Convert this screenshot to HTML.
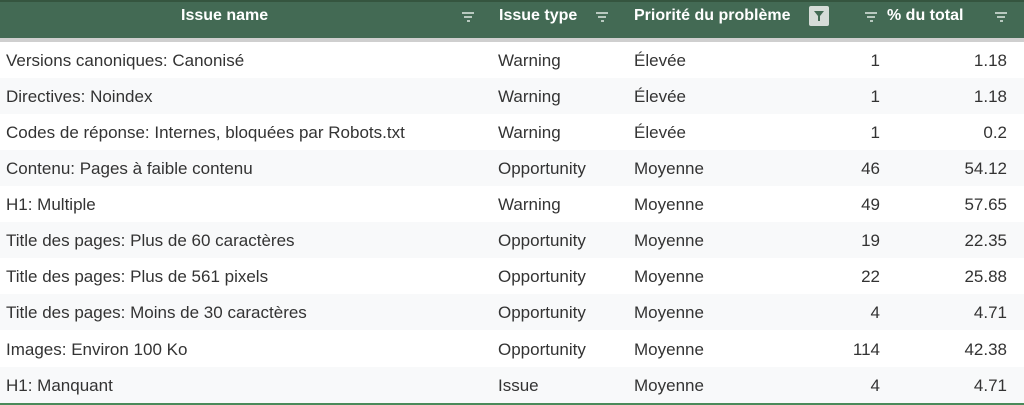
<!DOCTYPE html><html><head><style>
body{margin:0;width:1024px;height:405px;overflow:hidden;background:#fff;font-family:"Liberation Sans",sans-serif;font-size:17px;color:#333}
.hd{position:absolute;left:0;top:0;width:1024px;height:38px;background:#436a54;border-top:2px solid #35553f;box-sizing:border-box}
.band{position:absolute;left:0;top:38px;width:1024px;height:4px;background:#cfcfcf}
.h{position:absolute;top:7px;color:#fff;font-weight:bold;font-size:16px}
.f{position:absolute;top:12px;width:12px}
.f i{display:block;height:1.5px;background:#b8c9bf;margin:0 auto 2.5px}
.r{position:absolute;left:0;width:1024px;height:36px;line-height:38px}
.r span{position:absolute}
.g{background:#f8f9fa}
.n{right:144px;text-align:right}.p{right:17px;text-align:right}
</style></head><body>
<div class="hd"></div><div class="band"></div>
<div class="h" style="left:181px">Issue name</div>
<div class="f" style="left:462px"><i style="width:12px"></i><i style="width:8px"></i><i style="width:3px"></i></div>
<div class="h" style="left:499px">Issue type</div>
<div class="f" style="left:596px"><i style="width:12px"></i><i style="width:8px"></i><i style="width:3px"></i></div>
<div class="h" style="left:634px">Priorité du problème</div>
<div style="position:absolute;left:809px;top:6px;width:20px;height:20px;background:#d6dcd8;border-radius:2px"><svg width="20" height="20"><path d="M5 5h10l-4 5v5h-2v-5z" fill="#436a54"/></svg></div>
<div class="f" style="left:865px"><i style="width:12px"></i><i style="width:8px"></i><i style="width:3px"></i></div>
<div class="h" style="left:887px">% du total</div>
<div class="f" style="left:995px"><i style="width:12px"></i><i style="width:8px"></i><i style="width:3px"></i></div>

<div class="r" style="top:42px"><span style="left:6px">Versions canoniques: Canonisé</span><span style="left:498px">Warning</span><span style="left:634px">Élevée</span><span class="n">1</span><span class="p">1.18</span></div>
<div class="r g" style="top:78px"><span style="left:6px">Directives: Noindex</span><span style="left:498px">Warning</span><span style="left:634px">Élevée</span><span class="n">1</span><span class="p">1.18</span></div>
<div class="r" style="top:114px"><span style="left:6px">Codes de réponse: Internes, bloquées par Robots.txt</span><span style="left:498px">Warning</span><span style="left:634px">Élevée</span><span class="n">1</span><span class="p">0.2</span></div>
<div class="r g" style="top:150px"><span style="left:6px">Contenu: Pages à faible contenu</span><span style="left:498px">Opportunity</span><span style="left:634px">Moyenne</span><span class="n">46</span><span class="p">54.12</span></div>
<div class="r" style="top:186px"><span style="left:6px">H1: Multiple</span><span style="left:498px">Warning</span><span style="left:634px">Moyenne</span><span class="n">49</span><span class="p">57.65</span></div>
<div class="r g" style="top:222px"><span style="left:6px">Title des pages: Plus de 60 caractères</span><span style="left:498px">Opportunity</span><span style="left:634px">Moyenne</span><span class="n">19</span><span class="p">22.35</span></div>
<div class="r" style="top:258px"><span style="left:6px">Title des pages: Plus de 561 pixels</span><span style="left:498px">Opportunity</span><span style="left:634px">Moyenne</span><span class="n">22</span><span class="p">25.88</span></div>
<div class="r g" style="top:294px"><span style="left:6px">Title des pages: Moins de 30 caractères</span><span style="left:498px">Opportunity</span><span style="left:634px">Moyenne</span><span class="n">4</span><span class="p">4.71</span></div>
<div class="r" style="top:331px"><span style="left:6px">Images: Environ 100 Ko</span><span style="left:498px">Opportunity</span><span style="left:634px">Moyenne</span><span class="n">114</span><span class="p">42.38</span></div>
<div class="r g" style="top:367px"><span style="left:6px">H1: Manquant</span><span style="left:498px">Issue</span><span style="left:634px">Moyenne</span><span class="n">4</span><span class="p">4.71</span></div>
<div style="position:absolute;left:0;top:403px;width:1024px;height:2px;background:#4a8a5a"></div>
</body></html>
